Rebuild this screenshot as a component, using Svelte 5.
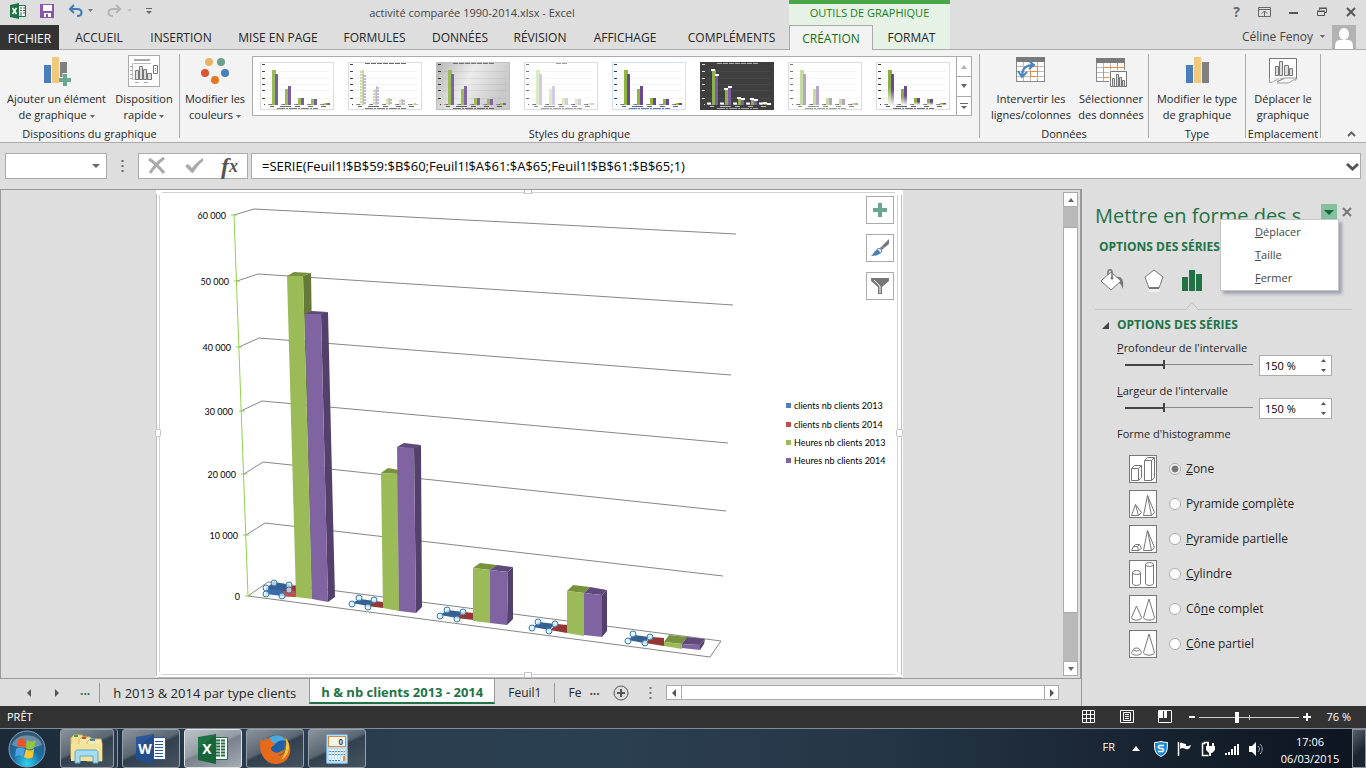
<script>
    const tabs = ['ACCUEIL', 'INSERTION', 'MISE EN PAGE', 'FORMULES', 'DONNÉES', 'RÉVISION', 'AFFICHAGE', 'COMPLÉMENTS']

    const chartStyles = [
        { name: 'Style 1', bg: '#fff', green: '#9bbb59', purple: '#7a5fa0', ink: '#444', border: '#dcdcdc' },
        { name: 'Style 2', bg: '#fff', green: '#c9dca6', purple: '#c3b3d8', ink: '#444', border: '#dcdcdc', title: '#444', dashed: true },
        { name: 'Style 3', bg: 'url(#greyFade)', green: '#9bbb59', purple: '#8064a2', ink: '#333', border: '#c0c0c0', title: '#555' },
        { name: 'Style 4', bg: '#fff', green: '#d9edc0', purple: '#d6c8ea', ink: '#777', border: '#dcdcdc', title: '#888', shortTitle: true },
        { name: 'Style 5', bg: '#fff', green: '#8db83c', purple: '#6a4696', ink: '#1f3f80', border: '#cfe0f5' },
        { name: 'Style 6', bg: '#3f3f3f', green: '#8fb04e', purple: '#7c5fa3', ink: '#ddd', border: '#3f3f3f', title: '#ccc', caps: true },
        { name: 'Style 7', bg: '#fff', green: '#c6dba0', purple: '#b5a5cb', ink: '#777', border: '#dcdcdc' },
        { name: 'Style 8', bg: '#fff', green: 'url(#greenFade)', purple: 'url(#purpleFade)', ink: '#333', border: '#dcdcdc' },
    ]

    const thumbBars = [
        { x: 12, g: 8, p: 12 },
        { x: 25, g: 27, p: 24 },
        { x: 38, g: 36, p: 36 },
        { x: 51, g: 37, p: 37 },
        { x: 64, g: 41, p: 41 },
    ]

    const gridLines = [
        { label: '60 000', right: 226, base: 219, points: '234,215 254,209 736,234' },
        { label: '50 000', right: 229, base: 285, points: '237,281 258,274 733,305' },
        { label: '40 000', right: 231, base: 351, points: '239,347 259,338 731,375' },
        { label: '30 000', right: 233, base: 415, points: '241,411 262,401 728,443' },
        { label: '20 000', right: 236, base: 478, points: '244,474 263,462 726,511' },
        { label: '10 000', right: 238, base: 539, points: '246,535 265,523 723,576' },
        { label: '0', right: 240, base: 600, points: '248,596 268,582 721,641' },
    ]

    const handles = [
        [274, 583], [289, 585], [266, 588], [266, 594], [282, 596], [289, 590],
        [359, 598], [374, 600], [352, 604], [368, 607],
        [447, 610], [463, 612], [440, 616], [457, 619],
        [538, 622], [555, 624], [532, 628], [549, 631],
        [633, 634], [650, 637], [628, 641], [645, 643],
    ]

    const legend = [
        { label: 'clients nb clients 2013', color: '#4f81bd', y: 409 },
        { label: 'clients nb clients 2014', color: '#c0504d', y: 428 },
        { label: 'Heures nb clients 2013', color: '#9bbb59', y: 446 },
        { label: 'Heures nb clients 2014', color: '#8064a2', y: 464 },
    ]

    const shapes = [
        { id: 'box', pre: '', key: 'Z', post: 'one' },
        { id: 'pyramid', pre: 'Pyramide ', key: 'c', post: 'omplète' },
        { id: 'pyramid-cut', pre: '', key: 'P', post: 'yramide partielle' },
        { id: 'cylinder', pre: '', key: 'C', post: 'ylindre' },
        { id: 'cone', pre: 'Cô', key: 'n', post: 'e complet' },
        { id: 'cone-cut', pre: '', key: 'C', post: 'ône partiel' },
    ]

    let shape = $state('box')
    let depth = $state(150)
    let width = $state(150)
    let menuOpen = $state(true)
</script>

{#snippet caret()}
    <svg class="caret" width="5" height="3" viewBox="0 0 5 3"><path d="M0 0h5L2.500 3z" fill="#666" /></svg>
{/snippet}

{#snippet arrow(dir)}
    <svg width="8" height="8" viewBox="0 0 8 8">
        {#if dir === 'up'}<path d="M1 6h6L4 2z" fill="#666" />{/if}
        {#if dir === 'down'}<path d="M1 2h6L4 6z" fill="#666" />{/if}
        {#if dir === 'left'}<path d="M6 0v8L2 4z" fill="#555" />{/if}
        {#if dir === 'right'}<path d="M2 0v8l4-4z" fill="#555" />{/if}
    </svg>
{/snippet}

{#snippet thumbnail(s)}
    <svg width="74" height="48" viewBox="0 0 74 48">
        <rect x=".5" y=".5" width="73" height="47" fill={s.bg} stroke={s.border} />
        {#if s.title}<path d={s.shortTitle ? 'M32 1.500h11' : 'M17 1.500h41'} stroke={s.title} stroke-dasharray="5 1" opacity=".8" />{/if}
        <path d="M2 2.500h3M2 9.500h3M2 16.500h3M2 22.500h3M2 28.500h3M2 36.500h3M4 42.500h1" stroke={s.ink} />
        <path d="M8 9.500h62M8 16.500h62M8 22.500h62M8 28.500h62M8 36.500h62" stroke={s.ink} opacity=".06" />
        {#each thumbBars as b}
            <path d="M{b.x - 4} 42.500h4" stroke="#6f9bd0" />
            <path d="M{b.x - 2} 42.500h2" stroke="#c0504d" />
            <rect x={b.x} y={b.g} width="4" height={43 - b.g} fill={s.green} />
            <rect x={b.x + 3} y={b.p} width="3" height={43 - b.p} fill={s.purple} />
            {#if s.dashed}
                <path d="M{b.x + 1} {b.g}V43M{b.x + 5} {b.p}V43" stroke="#fff" stroke-dasharray="1 2" stroke-width="2" />
            {/if}
            {#if s.caps}
                <path d="M{b.x - 1} {b.g}h4M{b.x + 3} {b.p + 1}h4M{b.x - 5} 41.500h4" stroke="#fff" stroke-width="2" />
            {/if}
        {/each}
        <path d="M10 44.500h4M20 44.500h11M35 44.500h5M48 44.500h5M61 44.500h5" stroke={s.ink} opacity=".8" />
        <path d="M17 46.500h41" stroke={s.ink} stroke-dasharray="8 1 2 1" opacity=".7" />
    </svg>
{/snippet}

{#snippet columns()}
    <rect x="0" y="8" width="7" height="18" fill="#4a7ebb" />
    <rect x="8" y="0" width="7" height="26" fill="#f0c97d" />
    <rect x="16" y="5" width="7" height="21" fill="#808080" />
{/snippet}

{#snippet shapeIcon(id)}
    <svg class="shape-icon" width="28" height="28" viewBox="0 0 28 28" fill="none" stroke="#777">
        <rect x=".5" y=".5" width="27" height="27" fill="#fff" />
        {#if id === 'box'}
            <path d="M2.500 13.500h7v12h-7zM2.500 13.500l3-3h7v12l-3 3M9.500 13.500l3-3M15.500 5.500h7v20h-7zM15.500 5.500l3-3h7v20l-3 3M22.500 5.500l3-3" />
        {:else if id === 'pyramid' || id === 'pyramid-cut'}
            <path d="M14.500 25.500l4-20 4 20zM18.500 5.500l7 17-3 3" />
            {#if id === 'pyramid'}
                <path d="M2.500 25.500l4-11 3 11zM6.500 14.500l6 8-3 3" />
            {:else}
                <path d="M2.500 25.500l2-4h4l1 4zM4.500 21.500l2-2h4l2 4-3 2M8.500 21.500l2-2" />
            {/if}
        {:else if id === 'cylinder'}
            <path d="M3.500 12.500v11c0 2.500 8 2.500 8 0v-11M16.500 4.500v19c0 2.500 8 2.500 8 0v-19" />
            <ellipse cx="7.500" cy="12.500" rx="4" ry="2" />
            <ellipse cx="20.500" cy="4.500" rx="4" ry="2" />
        {:else}
            <path d="M20 4l-5.500 18.500c0 3.500 11 3.500 11 0z" />
            {#if id === 'cone'}
                <path d="M7.500 11l-5 11.500c0 3.500 10 3.500 10 0z" />
            {:else}
                <path d="M4.500 19.500l-2 3c0 3.500 10 3.500 10 0l-2-3" />
                <ellipse cx="7.500" cy="19.500" rx="3" ry="1.500" />
            {/if}
        {/if}
    </svg>
{/snippet}

{#snippet officeIcon(letter, color, dark)}
    <svg width="30" height="30" viewBox="0 0 30 30">
        <path d="M15 3.500h14.500v22H15z" fill="#fff" stroke={color} />
        {#if letter === 'W'}
            <path d="M19 7.500h8M19 10.500h8M19 13.500h8M19 16.500h8M19 19.500h8M19 22.500h8" stroke={color} />
        {:else}
            <path d="M18 6.500h4M23 6.500h4M18 9.500h4M23 9.500h4M18 12.500h4M23 12.500h4M18 15.500h4M23 15.500h4M18 18.500h4M23 18.500h4M18 21.500h4M23 21.500h4" stroke={color} stroke-width="2" />
        {/if}
        <path d="M0 3l18-3v30L0 26z" fill={color} />
        <path d="M0 15l18-15v30L0 26z" fill={dark} opacity=".3" />
        <text x="9" y="20" text-anchor="middle" font-size="14" font-weight="700" fill="#fff">{letter}</text>
    </svg>
{/snippet}

<svg class="defs" width="0" height="0">
    <defs>
        <linearGradient id="greyFade" x1="0" x2="1" y2=".3"><stop stop-color="#b5b5b5" /><stop offset=".5" stop-color="#ececec" /><stop offset="1" stop-color="#c9c9c9" /></linearGradient>
        <linearGradient id="greenFade" x2="0" y2="1"><stop stop-color="#8aae45" /><stop offset=".5" stop-color="#8aae45" /><stop offset="1" stop-color="#f4f8ec" /></linearGradient>
        <linearGradient id="purpleFade" x2="0" y2="1"><stop stop-color="#6a4b90" /><stop offset=".5" stop-color="#6a4b90" /><stop offset="1" stop-color="#f4f0f8" /></linearGradient>
    </defs>
</svg>

<div class="window">
    <header class="top">
        <div class="top-left">
            <div class="title-row">
                <div class="quick">
                    <svg width="16" height="16" viewBox="0 0 16 16">
                        <path d="M8 2.500h7.500v11H8z" fill="#fff" stroke="#1f7244" />
                        <path d="M10 5h2M13 5h2M10 7.500h2M13 7.500h2M10 10h2M13 10h2M10 12h2" stroke="#1f7244" />
                        <path d="M0 2l9-2v16l-9-2z" fill="#1f7244" />
                        <path d="M2.500 5l4 6M6.500 5l-4 6" stroke="#fff" stroke-width="1.500" />
                    </svg>
                    <button class="bare save" aria-label="Enregistrer">
                        <svg width="14" height="14" viewBox="0 0 14 14"><path d="M0 0h14v14H0z" fill="#8a56ac" /><path d="M3 1h9v6H3zM4 9h7v4H8v-3H6v3H4z" fill="#fff" /></svg>
                    </button>
                    <button class="bare" aria-label="Annuler">
                        <svg width="25" height="14" viewBox="0 0 25 14"><path d="M2 5h7c6 0 6 7 0 7M6 1L2 5l4 4" fill="none" stroke="#3f7ab8" stroke-width="2" /><path d="M20 5h5l-2.500 3z" fill="#777" /></svg>
                    </button>
                    <button class="bare" aria-label="Rétablir">
                        <svg width="25" height="14" viewBox="0 0 25 14"><path d="M13 5H6c-6 0-6 7 0 7M9 1l4 4-4 4" fill="none" stroke="#b5b5b5" stroke-width="2" /><path d="M20 5h5l-2.500 3z" fill="#c2c2c2" /></svg>
                    </button>
                    <button class="bare" aria-label="Personnaliser">
                        <svg width="6" height="8" viewBox="0 0 6 8"><path d="M0 1.500h6" stroke="#666" /><path d="M0 4h6L3 7z" fill="#666" /></svg>
                    </button>
                </div>
                <div class="title">activité comparée 1990-2014.xlsx - Excel</div>
            </div>
            <nav class="tabs">
                <button class="tab file">FICHIER</button>
                {#each tabs as t}
                    <button class="tab">{t}</button>
                {/each}
            </nav>
        </div>
        <div class="context">
            <div class="context-title">OUTILS DE GRAPHIQUE</div>
            <div class="context-tabs">
                <button class="tab current">CRÉATION</button>
                <button class="tab">FORMAT</button>
            </div>
        </div>
        <div class="top-right">
            <div class="controls">
                <button class="bare help" aria-label="Aide">?</button>
                <button class="bare" aria-label="Options du ruban"><svg width="13" height="10" viewBox="0 0 13 10" fill="none" stroke="#666"><path d="M.5.5h12v9H.5zM0 2.500h13M6.500 9V4M4 6.500l2.500-2.500L9 6.500" /></svg></button>
                <button class="bare" aria-label="Réduire"><svg width="10" height="10" viewBox="0 0 10 10"><path d="M0 6h9" stroke="#555" stroke-width="2" /></svg></button>
                <button class="bare" aria-label="Restaurer"><svg width="11" height="10" viewBox="0 0 11 10" fill="none" stroke="#555"><path d="M.5 4.500h7v4h-7zM0 4h8M2.500 3V1.500h7v4H8M2 1h8" /></svg></button>
                <button class="bare" aria-label="Fermer la fenêtre"><svg width="10" height="10" viewBox="0 0 10 10"><path d="M1 1l8 8M9 1L1 9" stroke="#555" stroke-width="2" /></svg></button>
            </div>
            <div class="user">
                <span>Céline Fenoy</span>
                {@render caret()}
                <svg width="24" height="24" viewBox="0 0 24 24"><path d="M0 0h24v24H0z" fill="#b3b3b3" /><ellipse cx="12" cy="9" rx="5" ry="6" fill="#fff" /><path d="M3 24c0-7 1-9 6-9h6c5 0 6 2 6 9z" fill="#fff" /></svg>
            </div>
        </div>
    </header>

    <section class="ribbon">
        <div class="group g-layout">
            <div class="group-body">
                <button class="big wide">
                    <svg width="28" height="32" viewBox="-1 -2 28 32">{@render columns()}<path d="M15 23h13M21.500 16v14" stroke="#f3f3f3" stroke-width="6" /><path d="M15 23h12M21 17v12" stroke="#6aa792" stroke-width="4" /></svg>
                    <span>Ajouter un élément<br />de graphique {@render caret()}</span>
                </button>
                <button class="big">
                    <svg width="32" height="32" viewBox="0 0 32 32" fill="none" stroke="#777">
                        <rect x=".5" y=".5" width="31" height="31" fill="#fff" stroke="#aaa" />
                        <path d="M6 5h16" stroke="#aaa" stroke-width="2" />
                        <path d="M5.500 8.500H23M5.500 24.500H24M4.500 8v17" stroke="#bbb" />
                        <path d="M2 11.500h2M2 15.500h2M2 19.500h2M2 23.500h2M7 27.500h4M16 27.500h4" stroke="#aaa" />
                        <path d="M7.500 15.500h3v9h-3zM11.500 11.500h3v13h-3zM15.500 14.500h3v10h-3zM19.500 18.500h4v6h-4z" fill="#ddd" />
                        <path d="M25.500 10.500h4v8h-4zM27 13.500h1M27 15.500h1" />
                    </svg>
                    <span>Disposition<br />rapide {@render caret()}</span>
                </button>
            </div>
            <div class="group-name">Dispositions du graphique</div>
        </div>

        <div class="group g-styles">
            <div class="group-body">
                <button class="big">
                    <svg width="32" height="32" viewBox="0 0 32 32"><circle cx="10" cy="7" r="4" fill="#e9b562" /><circle cx="22" cy="7" r="4" fill="#68a28d" /><circle cx="6" cy="18" r="4" fill="#d9542f" /><circle cx="26" cy="18" r="4" fill="#4a7ebb" /><circle cx="16" cy="25" r="4" fill="#e5771e" /></svg>
                    <span>Modifier les<br />couleurs {@render caret()}</span>
                </button>
                <div class="gallery">
                    <div class="thumbs">
                        {#each chartStyles as s}
                            <button class="bare thumb" aria-label={s.name}>{@render thumbnail(s)}</button>
                        {/each}
                    </div>
                    <div class="gallery-nav">
                        <button class="bare faded" aria-label="Précédent">{@render arrow('up')}</button>
                        <button class="bare" aria-label="Suivant">{@render arrow('down')}</button>
                        <button class="bare" aria-label="Autres styles"><svg width="8" height="8" viewBox="0 0 8 8"><path d="M0 1.500h8" stroke="#666" /><path d="M1 4h6L4 7z" fill="#666" /></svg></button>
                    </div>
                </div>
            </div>
            <div class="group-name">Styles du graphique</div>
        </div>

        <div class="group g-data">
            <div class="group-body">
                <button class="big wide">
                    <svg width="32" height="32" viewBox="0 0 32 32" fill="none">
                        <rect x="1.500" y="2.500" width="28" height="24" fill="#fff" stroke="#888" />
                        <path d="M1 4.500h29" stroke="#7a7a7a" stroke-width="5" />
                        <path d="M2 11.500h27M2 16.500h27M2 21.500h27M8.500 7v19M15.500 7v19M22.500 7v19" stroke="#bbb" />
                        <path d="M15.500 16.500h7v5h-7zM15.500 11.500h7v5M22.500 11.500v10" stroke="#e98b3c" />
                        <path d="M7 21c0-8 4-11 11-11M14 6l5 4-5 4M3 16l4 6 5-5" stroke="#4a84c0" stroke-width="2" />
                    </svg>
                    <span>Intervertir les<br />lignes/colonnes</span>
                </button>
                <button class="big">
                    <svg width="32" height="32" viewBox="0 0 32 32" fill="none">
                        <rect x="1.500" y="3.500" width="28" height="23" fill="#fff" stroke="#888" />
                        <path d="M1 5.500h29" stroke="#7a7a7a" stroke-width="5" />
                        <path d="M2 12.500h27M2 17.500h27M2 22.500h27M8.500 8v18M15.500 8v18M22.500 8v18" stroke="#bbb" />
                        <path d="M29 12.500H8.500v10H15M22.500 8v8" stroke="#e98b3c" />
                        <path d="M14 15h18v17H14z" fill="#f3f3f3" />
                        <path d="M15.500 16.500h16v15h-16z" fill="#fff" stroke="#777" />
                        <path d="M17.500 23.500h2v8h-2zM21.500 19.500h2v12h-2zM24.500 22.500h2v9h-2zM27.500 25.500h2v6h-2z" stroke="#777" fill="#ddd" />
                    </svg>
                    <span>Sélectionner<br />des données</span>
                </button>
            </div>
            <div class="group-name">Données</div>
        </div>

        <div class="group g-type">
            <div class="group-body">
                <button class="big wide">
                    <svg width="23" height="32" viewBox="0 -2 23 32">{@render columns()}</svg>
                    <span>Modifier le type<br />de graphique</span>
                </button>
            </div>
            <div class="group-name">Type</div>
        </div>

        <div class="group g-place">
            <div class="group-body">
                <button class="big">
                    <svg width="32" height="32" viewBox="0 0 32 32" fill="none" stroke="#777">
                        <path d="M2.500 3.500h27v20h-27z" fill="#fff" />
                        <path d="M8.500 11.500h3v9h-3zM12.500 6.500h3v14h-3zM17.500 10.500h4v10h-4zM22.500 13.500h3v7h-3z" fill="#ddd" />
                        <path d="M2.500 23v4.500c5 0 5-4 10-2l5-2M10 27l7-4h12v2c-4-1-5 3-9 3H10" fill="#f8f8f8" stroke="#999" />
                    </svg>
                    <span>Déplacer le<br />graphique</span>
                </button>
            </div>
            <div class="group-name">Emplacement</div>
        </div>

        <button class="bare collapse" aria-label="Réduire le ruban"><svg width="9" height="6" viewBox="0 0 9 6"><path d="M1 5l3.500-3.500L8 5" fill="none" stroke="#666" stroke-width="2" /></svg></button>
    </section>

    <section class="formula-row">
        <div class="name-box">
            <input aria-label="Zone Nom" />
            <button class="bare" aria-label="Noms définis"><svg width="8" height="5" viewBox="0 0 8 5"><path d="M0 0h8L4 4z" fill="#666" /></svg></button>
        </div>
        <svg class="dots" width="3" height="12" viewBox="0 0 3 12"><path d="M.5 1h2M.5 6h2M.5 11h2" stroke="#666" stroke-width="2" /></svg>
        <div class="fx-box">
            <button class="bare" aria-label="Annuler la saisie"><svg width="18" height="18" viewBox="0 0 18 18"><path d="M1 2c6 4 10 8 15 14M16 1C10 5 6 10 2 16" fill="none" stroke="#aaa" stroke-width="3" /></svg></button>
            <button class="bare" aria-label="Valider"><svg width="20" height="18" viewBox="0 0 20 18"><path d="M1 9l3-2 4 4C11 7 14 4 19 1v3c-5 4-7 8-10 12H8z" fill="#aaa" /></svg></button>
            <button class="bare fx" aria-label="Insérer une fonction"><i>f</i><i class="x">x</i></button>
        </div>
        <div class="formula">
            <input aria-label="Barre de formule" value="=SERIE(Feuil1!$B$59:$B$60;Feuil1!$A$61:$A$65;Feuil1!$B$61:$B$65;1)" />
            <button class="bare" aria-label="Développer"><svg width="13" height="9" viewBox="0 0 13 9"><path d="M1 2l5.500 5L12 2" fill="none" stroke="#555" stroke-width="3" /></svg></button>
        </div>
    </section>

    <main class="workspace">
        <div class="book">
            <div class="sheet">
                <div class="canvas">
                    <div class="chart">
                        <svg class="plot" viewBox="155 190 748 488">
                            <rect x="156" y="190" width="747" height="488" fill="#fff" />
                            <path d="M156.500 194v482M901.500 195v480M157 677.500h745" stroke="#bdbdbd" />
                            <path d="M162 192.500h733M162 674.500h733M159.500 195v477M897.500 195v477" stroke="#d2d2d2" />
                            <g fill="#fff" stroke="#c4c4c4">
                                <rect x="155.500" y="429.500" width="5" height="7" rx="1" /><rect x="896.500" y="429.500" width="6" height="7" rx="1" />
                                <rect x="524.500" y="189.500" width="7" height="4" /><rect x="524.500" y="672.500" width="7" height="5" />
                            </g>

                            <g fill="none" stroke="#868686">
                                {#each gridLines as line}
                                    <polyline points={line.points} />
                                {/each}
                                <path d="M248 596l462 61 11-16" />
                            </g>
                            <path d="M234 215l14 381M231 215h6M234 281h6M236 347h6M239 411h6M241 474h6M243 535h6M245 596h6" fill="none" stroke="#92d050" />
                            {#each gridLines as line}
                                <text x={line.right} y={line.base} text-anchor="end">{line.label}</text>
                            {/each}

                            <!-- clients 2014 -->
                            <path d="M280 589l8-3h9v11l-17-1z" fill="#943634" /><path d="M281 591h14l2 6-16-1z" fill="#c0504d" />
                            <path d="M367 606l8-5 8 1v6zM456 618l8-6 10 1v7zM550 630l7-6 10 1v8zM645 643l7-6 12 1v8z" fill="#943634" />
                            <!-- clients 2013 -->
                            <path d="M266 588l8-6 16 3-7 5v6l-17-3z" fill="#366092" /><path d="M266 589l16 1v6l-16-2z" fill="#3a6dad" />
                            <path d="M352 603l8-4 15 2-7 5zM440 615l8-5 15 2-6 6zM533 627l6-5 16 2-6 6zM628 640l6-5 16 2-6 6z" fill="#366092" />
                            <!-- heures 2013 -->
                            <path d="M303 276l8-3 5 320-4 6z" fill="#667a37" />
                            <path d="M287 276l7-4 17 1-8 3zM381 473l7-5 11 2v4zM473 568l7-5 17 2-7 5zM567 591l6-6 17 2-6 6zM664 642l5-7 18 2-5 7z" fill="#76923c" />
                            <path d="M287 276h16l9 323-16-2zM381 473l17 1 1 137-16-3zM473 568l17 2v53l-17-2zM567 591l17 2v43l-17-3zM664 642l18 2v5l-18-3z" fill="#9bbb59" />
                            <!-- heures 2014 -->
                            <path d="M321 314l7-2 7 285-7 5zM414 448l7-3 1 162-6 6zM508 572l5-5v52l-6 6zM602 595l5-5v41l-5 6zM700 645l5-6-1 5-4 6z" fill="#54416b" />
                            <path d="M305 314l7-3 16 1-7 3zM397 447l7-4 17 2-7 4zM490 570l7-5 16 2-5 5zM584 593l6-6 17 3-5 5zM682 644l5-7 18 2-5 6z" fill="#5f4a7b" />
                            <path d="M305 314h16l7 288-16-3zM397 447l17 1 2 165-17-2zM490 570l18 2-1 53-17-2zM584 593l18 2v42l-18-2zM682 644l18 1v5l-18-2z" fill="#8064a2" />

                            <g fill="#d5f0f8" fill-opacity=".75" stroke="#3978ae">
                                {#each handles as [x, y]}
                                    <circle cx={x} cy={y} r="3" />
                                {/each}
                            </g>
                            {#each legend as item}
                                <rect x="786" y={item.y - 6} width="5" height="5" fill={item.color} />
                                <text x="794" y={item.y}>{item.label}</text>
                            {/each}
                        </svg>
                        <div class="chart-tools">
                            <button aria-label="Éléments de graphique"><svg width="16" height="16" viewBox="0 0 16 16"><path d="M1 8h14M8 1v14" stroke="#6aa792" stroke-width="4" /></svg></button>
                            <button aria-label="Styles de graphique"><svg width="20" height="18" viewBox="0 0 20 18"><path d="M19 0v5l-5 4-2-2z" fill="#777" /><path d="M12 7l2 2-2 2-2-2z" fill="#777" /><path d="M1 17c3-2 3-6 7-6 4 2 2 6-7 6z" fill="#4a7ebb" /><circle cx="9" cy="12" r="2.500" fill="none" stroke="#4a7ebb" /></svg></button>
                            <button aria-label="Filtres du graphique"><svg width="20" height="18" viewBox="0 0 20 18"><path d="M1 1h18v3l-7 6v7H8v-7L1 4z" fill="#777" /><path d="M4 3l6 6v7" fill="none" stroke="#fff" /></svg></button>
                        </div>
                    </div>
                </div>
                <div class="vscroll">
                    <button class="bare" aria-label="Haut">{@render arrow('up')}</button>
                    <div class="thumb-v"></div>
                    <button class="bare" aria-label="Bas">{@render arrow('down')}</button>
                </div>
            </div>
            <div class="sheet-tabs">
                <button class="bare nav" aria-label="Feuille précédente">{@render arrow('left')}</button>
                <button class="bare nav" aria-label="Feuille suivante">{@render arrow('right')}</button>
                <button class="bare more">...</button>
                <button class="sheet-tab first">h 2013 &amp; 2014 par type clients</button>
                <button class="sheet-tab active">h &amp; nb clients 2013 - 2014</button>
                <button class="sheet-tab">Feuil1</button>
                <button class="sheet-tab cut">Fe</button>
                <button class="bare rest">...</button>
                <button class="bare add" aria-label="Nouvelle feuille"><svg width="16" height="16" viewBox="0 0 16 16" fill="none" stroke="#555"><circle cx="8" cy="8" r="7" /><path d="M4 8h8M8 4v8" stroke-width="2" /></svg></button>
                <svg class="dots" width="3" height="12" viewBox="0 0 3 12"><path d="M.5 1h2M.5 6h2M.5 11h2" stroke="#777" stroke-width="2" /></svg>
                <div class="hscroll">
                    <button class="bare" aria-label="Gauche">{@render arrow('left')}</button>
                    <div class="thumb-h"></div>
                    <button class="bare" aria-label="Droite">{@render arrow('right')}</button>
                </div>
            </div>
        </div>

        <aside class="pane">
            <div class="pane-head">
                <h2>Mettre en forme des s...</h2>
                <button class="bare pane-menu" aria-label="Options du volet" onclick={() => (menuOpen = !menuOpen)}><svg width="10" height="5" viewBox="0 0 10 5"><path d="M0 0h10L5 5z" fill="#0e6b3a" /></svg></button>
                <button class="bare pane-close" aria-label="Fermer le volet"><svg width="10" height="10" viewBox="0 0 10 10"><path d="M1 1l8 8M9 1L1 9" stroke="#777" stroke-width="2" /></svg></button>
                {#if menuOpen}
                    <div class="menu">
                        <button><u>D</u>éplacer</button>
                        <button><u>T</u>aille</button>
                        <button><u>F</u>ermer</button>
                    </div>
                {/if}
            </div>
            <h3>OPTIONS DES SÉRIES</h3>
            <div class="pane-icons">
                <button class="bare" aria-label="Remplissage"><svg width="26" height="24" viewBox="0 0 26 24"><path d="M16 8c6-1 8 3 7 12-2-5-3-6-7-7z" fill="#777" /><path d="M1 12L11 3l10 9-10 9z" fill="#fff" stroke="#777" /><path d="M8 6V3c0-3 4-3 4 0v6" fill="none" stroke="#777" stroke-width="1.500" /><circle cx="12" cy="9" r="1.500" fill="#777" /></svg></button>
                <button class="bare" aria-label="Effets"><svg width="22" height="24" viewBox="0 0 22 24"><path d="M5 20h12l-1 3H6z" fill="#f0f0f0" /><path d="M11 1l9 7-4 11H6L2 8z" fill="#fff" stroke="#777" /><path d="M6 19h10" stroke="#777" stroke-width="2" /></svg></button>
                <button class="bare" aria-label="Options des séries"><svg width="20" height="22" viewBox="0 0 20 22"><path d="M0 7h6v14H0zM7 0h6v21H7zM14 4h6v17h-6z" fill="#217346" /></svg></button>
            </div>
            <div class="divider"><span></span><svg width="14" height="9" viewBox="0 0 14 9"><path d="M0 8.500h1l6-7 6 7h1" fill="none" stroke="#bdbdbd" /></svg><span class="grow"></span></div>

            <h3 class="section"><svg width="7" height="7" viewBox="0 0 7 7"><path d="M7 0v7H0z" fill="#444" /></svg>OPTIONS DES SÉRIES</h3>
            <div class="options">
                <label class="opt-label" for="depth"><u>P</u>rofondeur de l'intervalle</label>
                <div class="slider-row">
                    <input class="range" type="range" min="0" max="500" bind:value={depth} aria-label="Profondeur" />
                    <div class="spin">
                        <input id="depth" value="{depth} %" />
                        <div class="spin-buttons">
                            <button class="bare" aria-label="Plus" onclick={() => depth++}><svg width="5" height="3" viewBox="0 0 5 3"><path d="M0 3h5L2.500 0z" fill="#555" /></svg></button>
                            <button class="bare" aria-label="Moins" onclick={() => depth--}><svg width="5" height="3" viewBox="0 0 5 3"><path d="M0 0h5L2.500 3z" fill="#555" /></svg></button>
                        </div>
                    </div>
                </div>
                <label class="opt-label" for="width"><u>L</u>argeur de l'intervalle</label>
                <div class="slider-row">
                    <input class="range" type="range" min="0" max="500" bind:value={width} aria-label="Largeur" />
                    <div class="spin">
                        <input id="width" value="{width} %" />
                        <div class="spin-buttons">
                            <button class="bare" aria-label="Plus" onclick={() => width++}><svg width="5" height="3" viewBox="0 0 5 3"><path d="M0 3h5L2.500 0z" fill="#555" /></svg></button>
                            <button class="bare" aria-label="Moins" onclick={() => width--}><svg width="5" height="3" viewBox="0 0 5 3"><path d="M0 0h5L2.500 3z" fill="#555" /></svg></button>
                        </div>
                    </div>
                </div>
                <div class="opt-label">Forme d'histogramme</div>
                <div class="shapes">
                    {#each shapes as s}
                        <label class="shape">
                            {@render shapeIcon(s.id)}
                            <input type="radio" name="shape" value={s.id} bind:group={shape} />
                            <span>{s.pre}<u>{s.key}</u>{s.post}</span>
                        </label>
                    {/each}
                </div>
            </div>
        </aside>
    </main>

    <footer class="status">
        <span>PRÊT</span>
        <div class="views">
            <button class="bare" aria-label="Normal"><svg width="14" height="14" viewBox="0 0 14 14" fill="none" stroke="#fff"><path d="M.5.500h12v12H.5zM.5 4.500h12M.5 8.500h12M4.500.500v12M8.500.500v12" /></svg></button>
            <button class="bare" aria-label="Mise en page"><svg width="14" height="14" viewBox="0 0 14 14" fill="none" stroke="#fff"><path d="M.5.500h13v12H.5zM3.500 2.500h7v8h-7zM5 4.500h4M5 6.500h4M5 8.500h4" /></svg></button>
            <button class="bare" aria-label="Sauts de page"><svg width="14" height="14" viewBox="0 0 14 14" fill="none" stroke="#fff"><path d="M.5.500h13v12H.5z" /><path d="M1 1h4v7H1zM6 1h3v7H6z" fill="#fff" stroke="none" /></svg></button>
        </div>
        <div class="zoom">
            <button class="bare" aria-label="Zoom arrière"><svg width="6" height="10" viewBox="0 0 6 10"><path d="M0 5h6" stroke="#fff" stroke-width="2" /></svg></button>
            <input class="zoom-range" type="range" min="0" max="100" value="37" aria-label="Zoom" />
            <button class="bare" aria-label="Zoom avant"><svg width="9" height="10" viewBox="0 0 9 10"><path d="M0 5h8M4 1v8" stroke="#fff" stroke-width="2" /></svg></button>
        </div>
        <span class="percent">76 %</span>
    </footer>

    <div class="taskbar">
        <button class="bare start" aria-label="Démarrer">
            <svg width="38" height="38" viewBox="0 0 38 38">
                <defs><radialGradient id="orb" cx=".5" cy=".9" r=".9"><stop stop-color="#2fd3f5" /><stop offset=".45" stop-color="#1c6ea4" /><stop offset="1" stop-color="#35536b" /></radialGradient></defs>
                <circle cx="19" cy="19" r="18" fill="url(#orb)" stroke="#7fa5bd" />
                <path d="M4 15C8 2 30 2 34 15c-9 4-21 4-30 0z" fill="#fff" opacity=".3" />
                <path d="M10 10c3-2 5-2 8 0l-1 8c-3-2-6-2-8 0z" fill="#e8552b" /><path d="M19 10c3 2 6 2 9 0l-2 8c-3 2-6 2-8 0z" fill="#93c73b" />
                <path d="M8 19c3-2 6-2 9 0l-2 8c-3-2-5-2-8 0z" fill="#4ba3e0" /><path d="M18 19c3 2 5 2 8 0l-1 8c-3 2-6 2-9 0z" fill="#fbc62f" />
            </svg>
        </button>
        <div class="apps">
            <button class="app stacked" aria-label="Explorateur">
                <svg width="34" height="30" viewBox="0 0 34 30">
                    <path d="M1 4l3-3h8l2 4v20H1z" fill="#f2df93" stroke="#d8b95c" /><path d="M9 6l3-3h8l2 4v18H9z" fill="#f6e6a5" stroke="#d8b95c" /><path d="M17 8l3-3h11l1 4v18H17z" fill="#f8eab0" stroke="#d8b95c" />
                    <path d="M1 10h31v17H1z" fill="#f5e29a" /><path d="M4 2h4" stroke="#3aa845" stroke-width="2" /><path d="M12 4h4" stroke="#d84a36" stroke-width="2" /><path d="M20 6h5" stroke="#3b8ad0" stroke-width="2" />
                    <path d="M5 29V19c0-2 1-3 3-3h17c2 0 3 1 3 3v10h-5v-7H10v7z" fill="#a5dcf0" stroke="#58a9cc" />
                </svg>
            </button>
            <button class="app" aria-label="Word">{@render officeIcon('W', '#2b579a', '#17366b')}</button>
            <button class="app lit" aria-label="Excel">{@render officeIcon('X', '#1f7244', '#0c4a28')}</button>
            <button class="app" aria-label="Firefox">
                <svg width="32" height="32" viewBox="0 0 32 32">
                    <circle cx="17" cy="15" r="13" fill="#1d5fa8" /><path d="M9 6c5-6 16-5 19 3-5-4-10 0-13 3z" fill="#4fa9dc" />
                    <path d="M2 5c0 2 2 3 2 3 2-2 5-3 8-2-1 2 0 4 4 4 0 3-4 3-4 6 2 5 8 4 10 2 4 0 5-4 3-8 4 3 1 13-7 12 5 2 10-3 10-11-1-5-4-8-4-8 6 4 8 11 7 17-2 8-8 11-15 11C6 31-2 19 2 5z" fill="#e66a1c" />
                    <path d="M27 5c5 7 4 17-5 22 4-5 6-12 5-22z" fill="#fbc82d" />
                </svg>
            </button>
            <button class="app" aria-label="Calculatrice">
                <svg width="24" height="30" viewBox="0 0 24 30">
                    <rect x="1.500" y=".5" width="21" height="29" rx="1" fill="#b9dcf3" stroke="#6fa9d2" /><rect x="3.500" y="2.500" width="17" height="10" fill="#f4f7e8" stroke="#d98b3c" />
                    <text x="18" y="11" text-anchor="end" font-size="8" font-weight="700" fill="#447">0</text>
                    <path d="M4 16.500h16M4 19.500h16M4 22.500h16M4 25.500h16" stroke="#fff" stroke-width="2" stroke-dasharray="2 1" /><path d="M4 17.500h16M4 20.500h16M4 26.500h12" stroke="#548bb5" stroke-dasharray="2 1" /><path d="M18 22h2v5h-2z" fill="#ef8d23" />
                </svg>
            </button>
        </div>
        <div class="tray">
            <span class="lang">FR</span>
            <svg class="more-icons" width="8" height="5" viewBox="0 0 8 5"><path d="M0 5h8L4 0z" fill="#fff" /></svg>
            <svg width="14" height="16" viewBox="0 0 14 16"><path d="M.5 1.500c4 0 5-1 6.500-1s2.500 1 6.500 1c0 7 0 11-6.500 14C.5 12.500.5 8.500.5 1.500z" fill="#1d8ad4" stroke="#fff" /><path d="M10 4.500H5.500l-1 1v1l1 1h3l1 1v1l-1 1H4" fill="none" stroke="#fff" stroke-width="1.500" /></svg>
            <svg width="15" height="16" viewBox="0 0 15 16"><path d="M1.500 1v14" stroke="#fff" stroke-width="1.500" /><path d="M3 2c3-1 3 1 6 1v2c2 0 3 0 5-1-1 3-2 5-5 4-2 0-3-2-6 0z" fill="#fff" /></svg>
            <svg width="15" height="16" viewBox="0 0 15 16"><path d="M8 1.500H3.500v1h-2v12h6" fill="none" stroke="#fff" stroke-width="1.500" /><path d="M5 5h9v4l-3 3h-1v3H8v-3L5 9zM6 2h2v3H6zM11 2h2v3h-2z" fill="#fff" /></svg>
            <svg width="15" height="12" viewBox="0 0 15 12"><path d="M1 10v2M4 9v3M7 6v6M10 3v9M13 1v11" stroke="#fff" stroke-width="2" /></svg>
            <svg width="14" height="14" viewBox="0 0 14 14"><path d="M0 4h3l4-4v14l-4-4H0z" fill="#fff" /><path d="M9 4c2 2 2 4 0 6M11 2c3 3 3 7 0 10" fill="none" stroke="#aab" /></svg>
        </div>
        <div class="clock"><span>17:06</span><span>06/03/2015</span></div>
        <button class="bare desktop" aria-label="Bureau"></button>
    </div>
</div>

<style>
    :global(body) {
        background: #dedede;
    }
    .defs {
        position: absolute;
    }
    .window {
        display: flex;
        flex-direction: column;
        height: 100vh;
        background: #dedede;
        color: #262626;
        font-family: "Open Sans", "Noto Sans", sans-serif;
        font-size: 12px;
        line-height: 16px;
        overflow: hidden;
    }
    svg {
        display: block;
        flex: none;
    }
    button,
    input {
        font: inherit;
        color: inherit;
    }
    button {
        cursor: pointer;
    }
    .bare {
        display: flex;
        align-items: center;
        justify-content: center;
        padding: 0;
        border: 0;
        background: none;
    }

    /* title bar and ribbon tabs */
    .top {
        display: flex;
        height: 50px;
        flex: none;
    }
    .title-row {
        display: flex;
        align-items: center;
        height: 25px;
    }
    .quick {
        display: flex;
        align-items: center;
        gap: 14px;
        width: 145px;
        padding: 0 0 3px 10px;
    }
    .title {
        flex: 1;
        text-align: center;
        font-size: 11px;
        color: #444;
    }
    .top-left {
        display: flex;
        flex-direction: column;
    }
    .tabs {
        display: grid;
        grid-template-columns: 59px 80px 84px 110px 83px 88px 72px 98px 115px;
        height: 25px;
        border-bottom: 1px solid #ababab;
        box-sizing: border-box;
    }
    .tab {
        height: 24px;
        padding: 2px 0 0;
        border: 0;
        background: none;
        white-space: nowrap;
    }
    .tab.file {
        height: 25px;
        background: #333;
        color: #fff;
    }
    .context {
        width: 161px;
        background: #e6f2e6;
    }
    .context-title {
        box-sizing: border-box;
        height: 25px;
        padding-top: 1px;
        border-top: 4px solid #4ba64b;
        color: #178017;
        text-align: center;
        font-size: 11px;
    }
    .context-tabs {
        display: grid;
        grid-template-columns: 84px 77px;
    }
    .context-tabs .tab {
        height: 25px;
        border-bottom: 1px solid #ababab;
    }
    .context-tabs .current {
        padding-top: 1px;
        border: 1px solid #ababab;
        border-bottom: 0;
        background: #f3f3f3;
        color: #0f700f;
    }
    .top-right {
        flex: 1;
        border-bottom: 1px solid #ababab;
    }
    .controls {
        display: flex;
        align-items: center;
        justify-content: flex-end;
        gap: 18px;
        height: 24px;
        padding-right: 10px;
    }
    .help {
        font-size: 14px;
        font-weight: 700;
        color: #666;
    }
    .user {
        display: flex;
        align-items: center;
        justify-content: flex-end;
        gap: 7px;
        height: 25px;
        padding-right: 10px;
        color: #444;
    }
    .caret {
        display: inline-block;
        vertical-align: middle;
    }

    /* ribbon */
    .ribbon {
        display: flex;
        flex: none;
        box-sizing: border-box;
        height: 93px;
        background: #f3f3f3;
        border-bottom: 1px solid #ababab;
    }
    .group {
        display: flex;
        flex: none;
        flex-direction: column;
        box-sizing: border-box;
        margin: 4px 0;
        border-right: 1px solid #ababab;
    }
    .group-body {
        display: flex;
        flex: none;
        justify-content: center;
        height: 73px;
    }
    .group-name {
        text-align: center;
        font-size: 11px;
        line-height: 14px;
    }
    .big {
        display: flex;
        flex-direction: column;
        align-items: center;
        gap: 4px;
        min-width: 66px;
        padding: 1px 0 0;
        border: 0;
        background: none;
        font-size: 11px;
        line-height: 16px;
        white-space: nowrap;
    }
    .g-layout {
        width: 180px;
    }
    .g-layout .wide {
        width: 109px;
    }
    .g-styles {
        flex: 1;
        min-width: 0;
    }
    .g-data {
        width: 169px;
    }
    .g-data .wide {
        width: 94px;
    }
    .g-type {
        width: 97px;
    }
    .g-place {
        width: 75px;
    }
    .gallery {
        display: flex;
        flex: 1;
        box-sizing: border-box;
        height: 60px;
        margin: 2px 7px 0 2px;
        border: 1px solid #ababab;
        background: #fff;
        min-width: 0;
    }
    .g-styles .big {
        width: 70px;
        flex: none;
    }
    .thumbs {
        display: flex;
        flex: 1;
        gap: 14px;
        min-width: 0;
        padding: 5px 0 5px 7px;
        overflow: hidden;
    }
    .thumb {
        height: 48px;
    }
    .gallery-nav {
        display: grid;
        grid-template-rows: 1fr 1fr 1fr;
        width: 14px;
        border-left: 1px solid #ababab;
    }
    .gallery-nav button + button {
        border-top: 1px solid #ababab;
    }
    .faded svg {
        opacity: .5;
    }
    .collapse {
        align-self: flex-end;
        margin: 0 10px 5px 26px;
    }

    /* formula bar */
    .formula-row {
        display: flex;
        flex: none;
        align-items: center;
        height: 46px;
        padding: 0 5px;
    }
    .name-box,
    .fx-box,
    .formula {
        display: flex;
        align-items: center;
        box-sizing: border-box;
        height: 26px;
        border: 1px solid #ababab;
        background: #fff;
    }
    .name-box {
        width: 102px;
        padding-right: 6px;
    }
    .name-box input,
    .formula input {
        flex: 1;
        min-width: 0;
        padding: 0 0 0 10px;
        border: 0;
        outline: 0;
        background: none;
    }
    .formula input {
        font-size: 13px;
        color: #000;
    }
    .dots {
        margin: 0 14px;
    }
    .fx-box {
        justify-content: space-between;
        width: 110px;
        padding: 0 9px;
    }
    .fx {
        font-family: "Liberation Serif", serif;
        font-size: 24px;
        font-weight: 700;
        color: #555;
    }
    .fx .x {
        font-size: 18px;
    }
    .formula {
        flex: 1;
        margin-left: 3px;
        padding-right: 1px;
    }

    /* workbook */
    .workspace {
        display: flex;
        flex: 1;
        min-height: 0;
    }
    .book {
        display: flex;
        flex: 1;
        flex-direction: column;
        min-width: 0;
        border-right: 1px solid #999;
    }
    .sheet {
        display: flex;
        flex: 1;
        min-height: 0;
        border: 1px solid #999;
    }
    .canvas {
        display: flex;
        flex: 1;
        justify-content: center;
        min-width: 0;
        padding-right: 6px;
    }
    .chart {
        position: relative;
        height: 100%;
        aspect-ratio: 748 / 488;
    }
    .plot {
        width: 100%;
        height: 100%;
    }
    .plot text {
        font-family: Lato, "Open Sans", sans-serif;
        font-size: 9px;
        fill: #000;
    }
    .chart-tools {
        position: absolute;
        top: 6px;
        right: 9px;
        display: flex;
        flex-direction: column;
        gap: 10px;
    }
    .chart-tools button {
        display: flex;
        align-items: center;
        justify-content: center;
        width: 28px;
        height: 28px;
        padding: 0;
        border: 1px solid #ababab;
        background: #fff;
    }
    .vscroll {
        display: flex;
        flex-direction: column;
        box-sizing: border-box;
        width: 15px;
        margin: 2px 2px 2px 0;
        background: #b9b9b9;
    }
    .vscroll button {
        box-sizing: border-box;
        height: 15px;
        border: 1px solid #ababab;
        background: #fff;
    }
    .thumb-v {
        flex: 1;
        margin: 20px 0 48px;
        border: 1px solid #ababab;
        background: #fff;
    }

    .sheet-tabs {
        display: flex;
        align-items: center;
        flex: none;
        height: 27px;
        padding: 0 22px 0 15px;
    }
    .nav {
        width: 28px;
    }
    .more,
    .rest {
        padding: 0 9px 4px;
        font-weight: 700;
        color: #217346;
    }
    .rest {
        padding: 0 13px 4px 8px;
        color: #444;
    }
    .sheet-tab {
        box-sizing: border-box;
        height: 20px;
        padding: 0 13px;
        border: 0;
        border-right: 1px solid #999;
        background: none;
        white-space: nowrap;
    }
    .sheet-tab.first {
        width: 210px;
        border-left: 1px solid #999;
        border-right: 0;
        font-size: 13px;
    }
    .sheet-tab.active {
        width: 186px;
        height: 25px;
        align-self: flex-start;
        border-right: 1px solid #999;
        border-left: 1px solid #999;
        border-bottom: 2px solid #217346;
        background: #fff;
        color: #217346;
        font-size: 13px;
        font-weight: 700;
        padding: 2px 0 0;
    }
    .sheet-tab.cut {
        padding-right: 0;
        border-right: 0;
    }
    .sheet-tabs .dots {
        margin: 0 14px 0 20px;
    }
    .hscroll {
        display: flex;
        flex: 1;
        box-sizing: border-box;
        height: 15px;
        border: 1px solid #ababab;
        background: #fff;
    }
    .hscroll button {
        width: 14px;
    }
    .hscroll button:last-child {
        border-left: 1px solid #ababab;
    }
    .thumb-h {
        flex: 1;
        border-left: 1px solid #ababab;
    }

    /* format pane */
    .pane {
        box-sizing: border-box;
        width: 284px;
        padding: 11px 14px 0 13px;
    }
    .pane-head {
        position: relative;
        display: flex;
        height: 34px;
    }
    h2 {
        flex: 1;
        margin: 0;
        font-size: 20px;
        line-height: 32px;
        font-weight: 400;
        color: #1e7145;
        white-space: nowrap;
        overflow: hidden;
    }
    .pane-menu {
        width: 16px;
        height: 16px;
        margin: 4px 5px 0 8px;
        background: #86bfa0;
    }
    .pane-close {
        width: 10px;
        height: 16px;
        margin-top: 4px;
    }
    .menu {
        position: absolute;
        top: 19px;
        right: 13px;
        display: flex;
        flex-direction: column;
        box-sizing: border-box;
        width: 119px;
        padding: 0 0 1px;
        border: 1px solid #c6c6c6;
        background: #fff;
        box-shadow: 3px 3px 3px rgba(70, 70, 110, .4);
    }
    .menu button {
        height: 23px;
        padding: 0 0 0 34px;
        border: 0;
        background: none;
        text-align: left;
        font-size: 11px;
        color: #444;
    }
    h3 {
        display: flex;
        align-items: center;
        margin: 0;
        padding: 5px 0 0 4px;
        font-size: 12px;
        line-height: 16px;
        font-weight: 700;
        color: #217346;
    }
    .pane-icons {
        display: flex;
        align-items: center;
        gap: 17px;
        padding: 14px 0 0 5px;
    }
    .divider {
        display: flex;
        align-items: flex-end;
        height: 17px;
    }
    .divider span {
        width: 90px;
        border-top: 1px solid #c4c4c4;
    }
    .divider .grow {
        flex: 1;
    }
    .section {
        gap: 8px;
        padding: 7px 0 0 7px;
    }
    .options {
        padding-left: 22px;
    }
    .opt-label {
        display: block;
        padding-top: 8px;
        font-size: 11px;
        line-height: 14px;
    }
    .slider-row {
        display: flex;
        align-items: flex-start;
        gap: 6px;
        height: 21px;
        padding-left: 8px;
    }
    .range {
        width: 128px;
        height: 16px;
        margin: 1px 0 0;
        appearance: none;
        background: linear-gradient(#444, #444) 0 8px / 30% 2px no-repeat, linear-gradient(#888, #888) 0 8px / 100% 1px no-repeat;
    }
    .range::-webkit-slider-thumb {
        appearance: none;
        width: 2px;
        height: 9px;
        background: #444;
    }
    .spin {
        display: flex;
        box-sizing: border-box;
        width: 73px;
        height: 21px;
        border: 1px solid #ababab;
        background: #fff;
    }
    .spin input {
        flex: 1;
        min-width: 0;
        padding: 0 0 0 5px;
        border: 0;
        outline: 0;
        font-size: 11px;
        color: #000;
    }
    .spin-buttons {
        display: grid;
        width: 16px;
    }
    .shapes {
        display: flex;
        flex-direction: column;
        gap: 7px;
        padding: 14px 0 0 12px;
    }
    .shape {
        display: flex;
        align-items: center;
        height: 28px;
    }
    .shape input {
        width: 12px;
        height: 12px;
        margin: 0 5px 0 12px;
        appearance: none;
        border: 1px solid #ababab;
        border-radius: 50%;
        background: #fff;
    }
    .shape input:checked {
        background: radial-gradient(#777 3px, #fff 4px);
    }

    /* status bar */
    .status {
        display: flex;
        align-items: center;
        flex: none;
        height: 22px;
        padding: 0 15px 0 7px;
        background: #333;
        color: #fff;
        font-size: 11px;
    }
    .views {
        display: flex;
        gap: 24px;
        margin-left: auto;
    }
    .zoom {
        display: flex;
        align-items: center;
        gap: 4px;
        margin: 0 14px 0 17px;
    }
    .zoom-range {
        width: 100px;
        height: 12px;
        margin: 0;
        appearance: none;
        background: linear-gradient(#ccc, #ccc) 0 6px / 100% 1px no-repeat, linear-gradient(#ccc, #ccc) 50px 4px / 1px 5px no-repeat;
    }
    .zoom-range::-webkit-slider-thumb {
        appearance: none;
        width: 4px;
        height: 11px;
        background: #fff;
    }

    /* taskbar */
    .taskbar {
        display: flex;
        align-items: stretch;
        flex: none;
        box-sizing: border-box;
        height: 40px;
        border-top: 1px solid #7f8b96;
        background: linear-gradient(90deg, #1c2a38, #2a3d50 20%, #2b3f52 45%, #253545 65%, #1c2937 78%, #0b141f);
        color: #fff;
        font-size: 11px;
    }
    .start {
        width: 54px;
    }
    .apps {
        display: flex;
        gap: 4px;
        padding-left: 6px;
    }
    .app {
        display: flex;
        align-items: center;
        justify-content: center;
        box-sizing: border-box;
        width: 58px;
        padding: 0;
        border: 1px solid #96a1aa;
        border-radius: 3px;
        background: linear-gradient(155deg, #8b949c, #5a6672 45%, #33414f 50%, #46535f);
    }
    .app.stacked {
        width: 54px;
        margin-right: 4px;
        box-shadow: 3px 0 0 #2a3a49, 4px 0 0 #8b96a0;
    }
    .app.lit {
        border-color: #dde2e6;
        background: linear-gradient(155deg, #bcc3c8, #949da4 45%, #78828b 50%, #a5acb2);
    }
    .tray {
        display: flex;
        align-items: center;
        gap: 9px;
        margin-left: auto;
    }
    .lang {
        padding: 0 8px 4px 0;
    }
    .more-icons {
        margin-right: 5px;
    }
    .clock {
        display: flex;
        flex-direction: column;
        align-items: center;
        padding: 4px 0 0 14px;
        width: 66px;
        line-height: 17px;
    }
    .desktop {
        width: 14px;
        margin-left: 9px;
        border: 1px solid #8c949b;
        background: linear-gradient(135deg, #55606a, #1b2530 60%);
    }
</style>
